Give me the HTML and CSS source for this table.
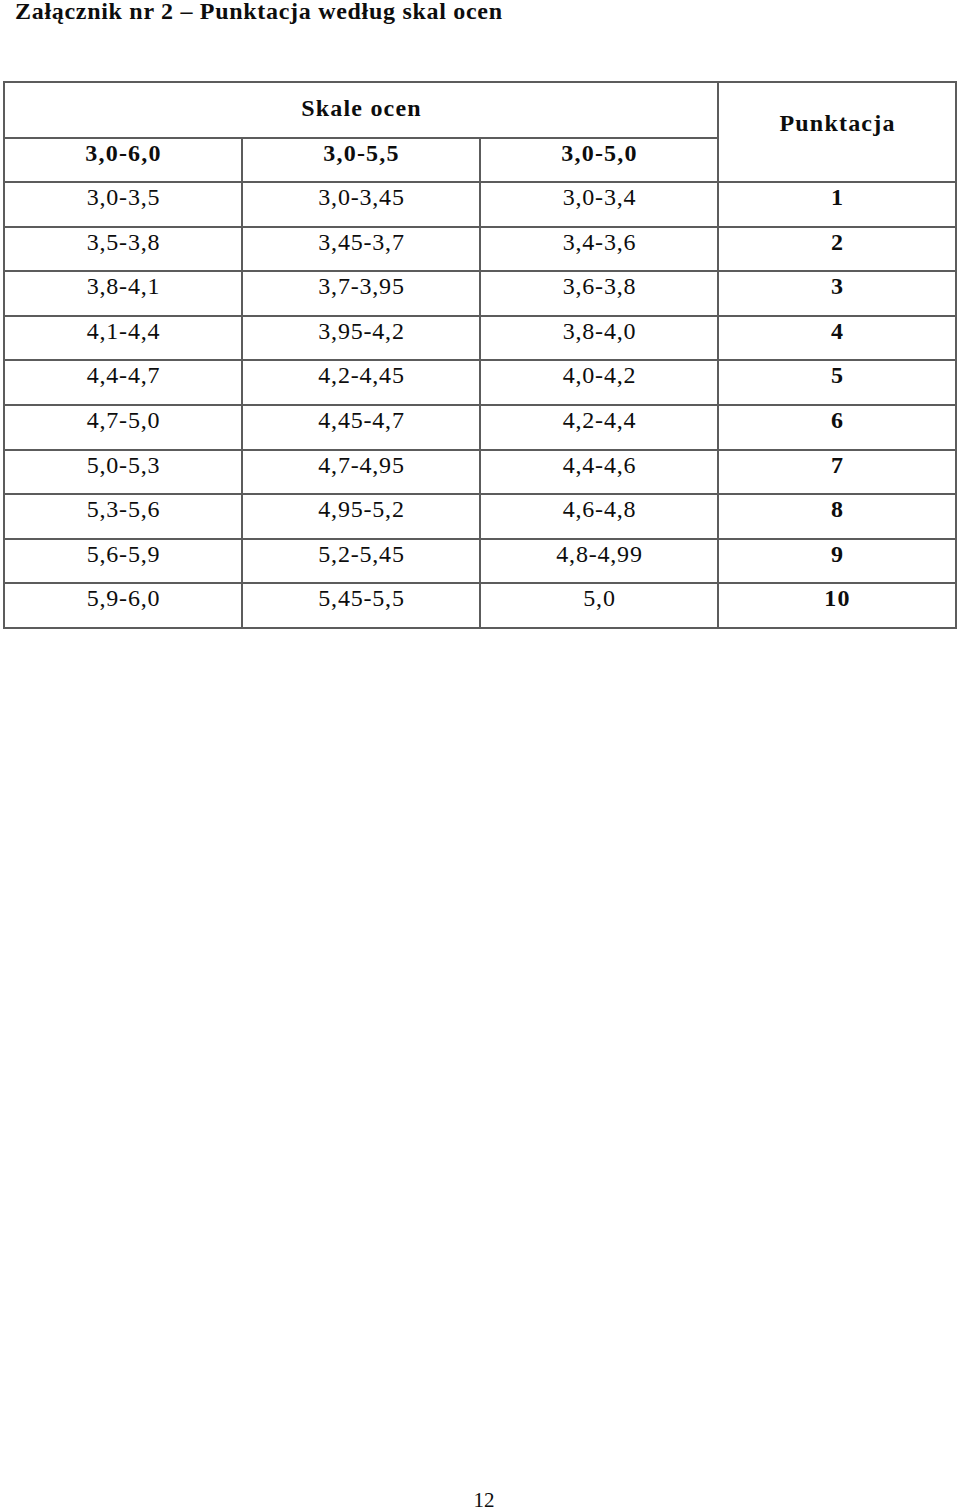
FILE: index.html
```html
<!DOCTYPE html>
<html lang="pl">
<head>
<meta charset="utf-8">
<title>Załącznik nr 2 – Punktacja według skal ocen</title>
<link rel="stylesheet" href="styles.css">
</head>
<body>
<div class="page">
  <h1 class="title">Załącznik nr 2 – Punktacja według skal ocen</h1>
  <table class="grades">
    <colgroup><col class="c"><col class="c"><col class="c"><col class="c"></colgroup>
    <tr class="h1">
      <th colspan="3" class="skale">Skale ocen</th>
      <th rowspan="2" class="pkt">Punktacja</th>
    </tr>
    <tr class="h2">
      <th>3,0-6,0</th><th>3,0-5,5</th><th>3,0-5,0</th>
    </tr>
    <tr><td>3,0-3,5</td><td>3,0-3,45</td><td>3,0-3,4</td><td class="p">1</td></tr>
    <tr><td>3,5-3,8</td><td>3,45-3,7</td><td>3,4-3,6</td><td class="p">2</td></tr>
    <tr><td>3,8-4,1</td><td>3,7-3,95</td><td>3,6-3,8</td><td class="p">3</td></tr>
    <tr><td>4,1-4,4</td><td>3,95-4,2</td><td>3,8-4,0</td><td class="p">4</td></tr>
    <tr><td>4,4-4,7</td><td>4,2-4,45</td><td>4,0-4,2</td><td class="p">5</td></tr>
    <tr><td>4,7-5,0</td><td>4,45-4,7</td><td>4,2-4,4</td><td class="p">6</td></tr>
    <tr><td>5,0-5,3</td><td>4,7-4,95</td><td>4,4-4,6</td><td class="p">7</td></tr>
    <tr><td>5,3-5,6</td><td>4,95-5,2</td><td>4,6-4,8</td><td class="p">8</td></tr>
    <tr><td>5,6-5,9</td><td>5,2-5,45</td><td>4,8-4,99</td><td class="p">9</td></tr>
    <tr><td>5,9-6,0</td><td>5,45-5,5</td><td>5,0</td><td class="p">10</td></tr>
  </table>
  <div class="spacer"></div>
  <div class="pagenum">12</div>
</div>
</body>
</html>
```
FILE: styles.css
```css
html, body {
  margin: 0;
  padding: 0;
  background: #fff;
}
.page {
  width: 960px;
  height: 1511px;
  display: flex;
  flex-direction: column;
  color: #0d0d0d;
  font-family: "Liberation Serif", "Times New Roman", serif;
}
.title {
  margin: 0;
  padding: 0 0 0 15px;
  height: 81px;
  font-size: 24px;
  line-height: 22px;
  font-weight: bold;
  letter-spacing: 0.7px;
}
.grades {
  margin-left: 3px;
  width: 954px;
  table-layout: fixed;
  border-collapse: separate;
  border-spacing: 2px;
  background: #5c5c5c;
  font-size: 24px;
}
.grades col.c { width: 236px; }
.grades th, .grades td {
  background: #fff;
  padding: 0;
  text-align: center;
  vertical-align: top;
  line-height: 26px;
  letter-spacing: 0.8px;
  text-indent: 1px;
}
.grades th {
  font-weight: bold;
  letter-spacing: 1.2px;
}
.grades tr.h1 { height: 54px; }
.grades tr.h2 { height: 42px; }
.grades tr { height: 42.6px; }
.grades th.skale { padding-top: 12px; }
.grades th.pkt { padding-top: 27px; }
.grades tr.h2 th { padding-top: 1px; }
.grades td { padding-top: 1px; }
.grades td.p {
  font-weight: bold;
  letter-spacing: 1.2px;
}
.spacer { flex: 1; }
.pagenum {
  text-align: center;
  font-size: 21px;
  line-height: 24px;
  padding: 0 0 0 8px;
  height: 23px;
}
```
